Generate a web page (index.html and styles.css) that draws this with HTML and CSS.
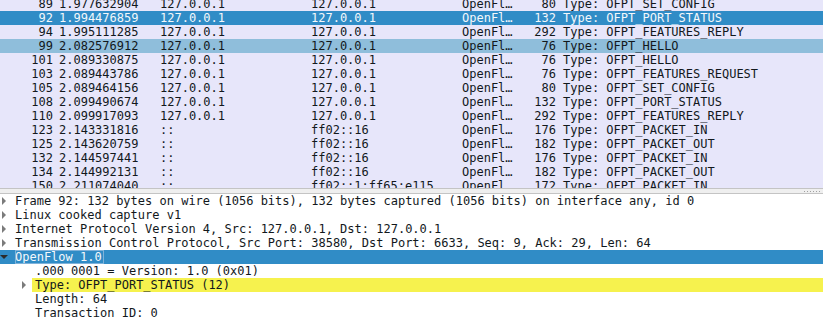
FILE: index.html
```html
<!DOCTYPE html>
<html>

<head>
    <link rel="stylesheet" href="styles.css">
</head>

<body>
    <div class="packet-list">
        <div class="rows">
            <div class="row"><span class="c-no">89</span><span class="c-time">1.977632904</span><span class="c-src">127.0.0.1</span><span class="c-dst">127.0.0.1</span><span class="c-proto">OpenFl…</span><span class="c-len">80</span><span class="c-info">Type: OFPT_SET_CONFIG</span></div>
            <div class="row selected"><span class="c-no">92</span><span class="c-time">1.994476859</span><span class="c-src">127.0.0.1</span><span class="c-dst">127.0.0.1</span><span class="c-proto">OpenFl…</span><span class="c-len">132</span><span class="c-info">Type: OFPT_PORT_STATUS</span></div>
            <div class="row"><span class="c-no">94</span><span class="c-time">1.995111285</span><span class="c-src">127.0.0.1</span><span class="c-dst">127.0.0.1</span><span class="c-proto">OpenFl…</span><span class="c-len">292</span><span class="c-info">Type: OFPT_FEATURES_REPLY</span></div>
            <div class="row related"><span class="c-no">99</span><span class="c-time">2.082576912</span><span class="c-src">127.0.0.1</span><span class="c-dst">127.0.0.1</span><span class="c-proto">OpenFl…</span><span class="c-len">76</span><span class="c-info">Type: OFPT_HELLO</span></div>
            <div class="row"><span class="c-no">101</span><span class="c-time">2.089330875</span><span class="c-src">127.0.0.1</span><span class="c-dst">127.0.0.1</span><span class="c-proto">OpenFl…</span><span class="c-len">76</span><span class="c-info">Type: OFPT_HELLO</span></div>
            <div class="row"><span class="c-no">103</span><span class="c-time">2.089443786</span><span class="c-src">127.0.0.1</span><span class="c-dst">127.0.0.1</span><span class="c-proto">OpenFl…</span><span class="c-len">76</span><span class="c-info">Type: OFPT_FEATURES_REQUEST</span></div>
            <div class="row"><span class="c-no">105</span><span class="c-time">2.089464156</span><span class="c-src">127.0.0.1</span><span class="c-dst">127.0.0.1</span><span class="c-proto">OpenFl…</span><span class="c-len">80</span><span class="c-info">Type: OFPT_SET_CONFIG</span></div>
            <div class="row"><span class="c-no">108</span><span class="c-time">2.099490674</span><span class="c-src">127.0.0.1</span><span class="c-dst">127.0.0.1</span><span class="c-proto">OpenFl…</span><span class="c-len">132</span><span class="c-info">Type: OFPT_PORT_STATUS</span></div>
            <div class="row"><span class="c-no">110</span><span class="c-time">2.099917093</span><span class="c-src">127.0.0.1</span><span class="c-dst">127.0.0.1</span><span class="c-proto">OpenFl…</span><span class="c-len">292</span><span class="c-info">Type: OFPT_FEATURES_REPLY</span></div>
            <div class="row"><span class="c-no">123</span><span class="c-time">2.143331816</span><span class="c-src">::</span><span class="c-dst">ff02::16</span><span class="c-proto">OpenFl…</span><span class="c-len">176</span><span class="c-info">Type: OFPT_PACKET_IN</span></div>
            <div class="row"><span class="c-no">125</span><span class="c-time">2.143620759</span><span class="c-src">::</span><span class="c-dst">ff02::16</span><span class="c-proto">OpenFl…</span><span class="c-len">182</span><span class="c-info">Type: OFPT_PACKET_OUT</span></div>
            <div class="row"><span class="c-no">132</span><span class="c-time">2.144597441</span><span class="c-src">::</span><span class="c-dst">ff02::16</span><span class="c-proto">OpenFl…</span><span class="c-len">176</span><span class="c-info">Type: OFPT_PACKET_IN</span></div>
            <div class="row"><span class="c-no">134</span><span class="c-time">2.144992131</span><span class="c-src">::</span><span class="c-dst">ff02::16</span><span class="c-proto">OpenFl…</span><span class="c-len">182</span><span class="c-info">Type: OFPT_PACKET_OUT</span></div>
            <div class="row"><span class="c-no">150</span><span class="c-time">2.211074040</span><span class="c-src">::</span><span class="c-dst">ff02::1:ff65:e115</span><span class="c-proto">OpenFl…</span><span class="c-len">172</span><span class="c-info">Type: OFPT_PACKET_IN</span></div>
        </div>
    </div>

    <div class="splitter"><span class="grip"></span></div>

    <div class="details">
        <div class="node"><span class="arrow closed"></span><span class="label">Frame 92: 132 bytes on wire (1056 bits), 132 bytes captured (1056 bits) on interface any, id 0</span></div>
        <div class="node"><span class="arrow closed"></span><span class="label">Linux cooked capture v1</span></div>
        <div class="node"><span class="arrow closed"></span><span class="label">Internet Protocol Version 4, Src: 127.0.0.1, Dst: 127.0.0.1</span></div>
        <div class="node"><span class="arrow closed"></span><span class="label">Transmission Control Protocol, Src Port: 38580, Dst Port: 6633, Seq: 9, Ack: 29, Len: 64</span></div>
        <div class="node current"><span class="arrow open"></span><span class="label focus">OpenFlow 1.0</span></div>
        <div class="node child"><span class="arrow"></span><span class="label">.000 0001 = Version: 1.0 (0x01)</span></div>
        <div class="node child"><span class="arrow closed"></span><span class="label warn">Type: OFPT_PORT_STATUS (12)</span></div>
        <div class="node child"><span class="arrow"></span><span class="label">Length: 64</span></div>
        <div class="node child"><span class="arrow"></span><span class="label">Transaction ID: 0</span></div>
    </div>
</body>

</html>
```

FILE: styles.css
```css
body {
    margin: 0;
    width: 823px;
    height: 332px;
    overflow: hidden;
    background-color: #ffffff;
    font-family: 'DejaVu Sans Mono', monospace;
    font-size: 12px;
    line-height: 14px;
    color: #12181c;
}

.packet-list {
    height: 188px;
    overflow: hidden;
    background-color: #e7e6fa;
    border-bottom: 1px solid #c4c4c4;
}

.rows {
    margin-top: -3px;
}

.row {
    display: flex;
    height: 14px;
    white-space: pre;
}

.row.selected {
    background-color: #308cc6;
    color: #f4f8fb;
}

.row.related {
    background-color: #8fbedb;
}

.c-no {
    width: 53px;
    padding-right: 3px;
    text-align: right;
}

.c-time {
    width: 98px;
    padding-left: 3px;
}

.c-src {
    width: 148px;
    padding-left: 3px;
}

.c-dst {
    width: 148px;
    padding-left: 3px;
}

.c-proto {
    width: 54px;
    padding-left: 3px;
}

.c-len {
    width: 40px;
    padding-right: 4px;
    text-align: right;
}

.c-info {
    padding-left: 3px;
}

.splitter {
    height: 4px;
    background-color: #efefef;
    border-bottom: 1px solid #c4c4c4;
    display: flex;
    justify-content: flex-end;
    align-items: center;
}

.grip {
    width: 16px;
    height: 1px;
    margin-right: 3px;
    background-image: linear-gradient(to right, #a0a0a0 1px, transparent 1px);
    background-size: 3px 1px;
}

.details {
    background-color: #ffffff;
}

.node {
    display: flex;
    align-items: center;
    height: 14px;
    white-space: pre;
}

.node.current {
    background-color: #308cc6;
    color: #f4f8fb;
}

.arrow {
    width: 15px;
    height: 14px;
    flex-shrink: 0;
    position: relative;
}

.child .arrow {
    margin-left: 20px;
}

.arrow.closed::before {
    content: "";
    position: absolute;
    left: 2px;
    top: 3px;
    border-top: 4px solid transparent;
    border-bottom: 4px solid transparent;
    border-left: 4px solid #7b7b7b;
}

.arrow.open::before {
    content: "";
    position: absolute;
    left: 0;
    top: 5px;
    border-left: 4px solid transparent;
    border-right: 4px solid transparent;
    border-top: 4px solid #2b2b2b;
}

.label.focus {
    outline: 1px solid #7fb2da;
    outline-offset: -1px;
    padding-right: 2px;
}

.label.warn {
    flex-grow: 1;
    background-color: #f6f24e;
    padding-left: 3px;
    margin-left: -3px;
}
```
